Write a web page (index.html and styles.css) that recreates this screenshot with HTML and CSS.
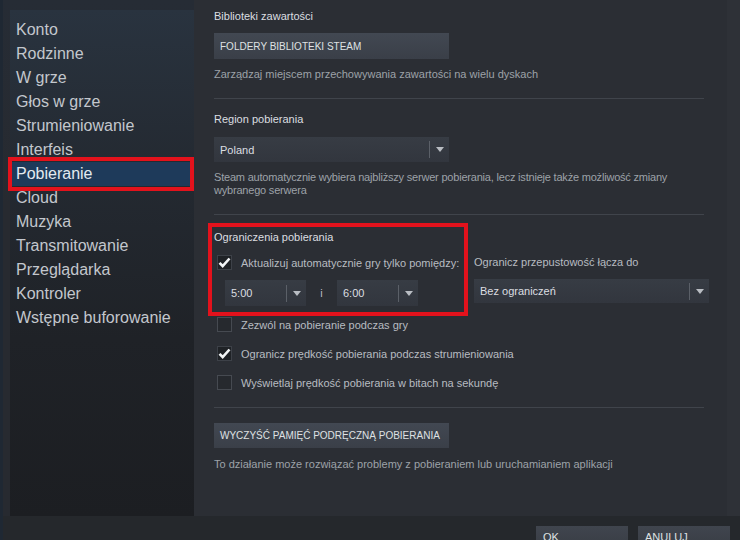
FILE: index.html
```html
<!DOCTYPE html>
<html lang="pl">
<head>
<meta charset="utf-8">
<title>Ustawienia – Pobieranie</title>
<link rel="stylesheet" href="styles.css">
</head>
<body>
<div class="window">
  <div class="body">
    <aside class="side-wrap">
      <nav class="sidebar">
        <div class="nav-item">Konto</div>
        <div class="nav-item">Rodzinne</div>
        <div class="nav-item">W grze</div>
        <div class="nav-item">Głos w grze</div>
        <div class="nav-item">Strumieniowanie</div>
        <div class="nav-item">Interfeis</div>
        <div class="nav-item active marked">Pobieranie</div>
        <div class="nav-item">Cloud</div>
        <div class="nav-item">Muzyka</div>
        <div class="nav-item">Transmitowanie</div>
        <div class="nav-item">Przeglądarka</div>
        <div class="nav-item">Kontroler</div>
        <div class="nav-item">Wstępne buforowanie</div>
      </nav>
    </aside>

    <main class="main">
      <section class="sec-lib">
        <div class="heading">Biblioteki zawartości</div>
        <button class="btn btn-wide">FOLDERY BIBLIOTEKI STEAM</button>
        <p class="desc desc-lib">Zarządzaj miejscem przechowywania zawartości na wielu dyskach</p>
      </section>
      <hr class="sep sep-1">

      <section class="sec-region">
        <div class="heading heading-region">Region pobierania</div>
        <div class="select select-region">
          <span class="select-value">Poland</span>
          <span class="select-arrow"><svg width="8" height="5" viewBox="0 0 8 5"><path d="M0 0h8L4 5z" fill="#b9bdc3"/></svg></span>
        </div>
        <p class="desc desc-region">Steam automatycznie wybiera najbliższy serwer pobierania, lecz istnieje także możliwość zmiany<br>wybranego serwera</p>
      </section>
      <hr class="sep sep-2">

      <section class="sec-limits">
        <div class="limits-box">
          <div class="heading heading-limits">Ograniczenia pobierania</div>
          <div class="limits-cols">
            <div class="limits-left">
              <label class="check-row">
                <span class="check checked"><svg width="13" height="11" viewBox="0 0 13 11"><path d="M1.5 5.8l3.2 3.2 6.8-7.5" fill="none" stroke="#f2f4f6" stroke-width="2.6"/></svg></span>
                <span class="check-label">Aktualizuj automatycznie gry tylko pomiędzy:</span>
              </label>
              <div class="time-row">
                <div class="select select-time">
                  <span class="select-value">5:00</span>
                  <span class="select-arrow"><svg width="8" height="5" viewBox="0 0 8 5"><path d="M0 0h8L4 5z" fill="#b9bdc3"/></svg></span>
                </div>
                <span class="time-and">i</span>
                <div class="select select-time">
                  <span class="select-value">6:00</span>
                  <span class="select-arrow"><svg width="8" height="5" viewBox="0 0 8 5"><path d="M0 0h8L4 5z" fill="#b9bdc3"/></svg></span>
                </div>
              </div>
            </div>
            <div class="limits-right">
              <div class="check-label">Ogranicz przepustowość łącza do</div>
              <div class="select select-bw">
                <span class="select-value">Bez ograniczeń</span>
                <span class="select-arrow"><svg width="8" height="5" viewBox="0 0 8 5"><path d="M0 0h8L4 5z" fill="#b9bdc3"/></svg></span>
              </div>
            </div>
          </div>
          <div class="mark-frame"></div>
        </div>

        <div class="check-list">
          <label class="check-row">
            <span class="check"></span>
            <span class="check-label">Zezwól na pobieranie podczas gry</span>
          </label>
          <label class="check-row">
            <span class="check checked"><svg width="13" height="11" viewBox="0 0 13 11"><path d="M1.5 5.8l3.2 3.2 6.8-7.5" fill="none" stroke="#f2f4f6" stroke-width="2.6"/></svg></span>
            <span class="check-label">Ogranicz prędkość pobierania podczas strumieniowania</span>
          </label>
          <label class="check-row">
            <span class="check"></span>
            <span class="check-label">Wyświetlaj prędkość pobierania w bitach na sekundę</span>
          </label>
        </div>
      </section>
      <hr class="sep sep-3">

      <section class="sec-cache">
        <button class="btn btn-wide">WYCZYŚĆ PAMIĘĆ PODRĘCZNĄ POBIERANIA</button>
        <p class="desc desc-cache">To działanie może rozwiązać problemy z pobieraniem lub uruchamianiem aplikacji</p>
      </section>
    </main>
    <div class="edge"></div>
  </div>

  <footer class="footer">
    <button class="btn btn-foot">OK</button>
    <button class="btn btn-foot">ANULUJ</button>
  </footer>
</div>
</body>
</html>
```

FILE: styles.css
```css
* {
  box-sizing: border-box;
}

html, body {
  margin: 0;
  padding: 0;
}

body {
  width: 740px;
  height: 540px;
  overflow: hidden;
  background: #272a30;
  font-family: "Liberation Sans", Arial, sans-serif;
  color: #c7cbd0;
}

.window {
  display: flex;
  flex-direction: column;
  height: 540px;
  border-left: 3px solid #1f2833;
}

.body {
  display: flex;
  height: 516px;
}

/* ---------- left navigation ---------- */

.side-wrap {
  width: 191px;
  padding: 10px 0 0 7px;
  background: linear-gradient(180deg, #262c35 0%, #272a30 40%);
}

.sidebar {
  height: 506px;
  padding-top: 8px;
  background: linear-gradient(180deg, #29333f 0%, #242a32 30%, #1f2227 65%, #1c1e22 100%);
}

.nav-item {
  position: relative;
  height: 24px;
  line-height: 24px;
  padding-left: 6px;
  font-size: 16px;
  color: #c3c7cd;
  white-space: nowrap;
}

.nav-item.active {
  background: #1e3a5a;
  color: #e4eaf0;
}

.nav-item.marked::after {
  content: "";
  position: absolute;
  left: -2px;
  right: 0;
  top: -5px;
  bottom: -5px;
  border: 4px solid #e3121c;
}

/* ---------- main panel ---------- */

.main {
  width: 533px;
  padding: 9px 17px 0 20px;
  background: #2b2e34;
}

.edge {
  flex: 1;
  background: #2e3137;
}

.heading {
  font-size: 11px;
  line-height: 14px;
  color: #dcdee0;
}

.desc {
  margin: 0;
  font-size: 11px;
  line-height: 14px;
  color: #9da2a8;
}

.btn {
  display: block;
  border: 0;
  margin: 0;
  padding: 0 0 0 6px;
  text-align: left;
  font-family: "Liberation Sans", Arial, sans-serif;
  font-size: 10px;
  color: #dfe1e3;
  background: linear-gradient(180deg, #424852 0%, #3a3f48 100%);
}

.btn-wide {
  width: 235px;
  height: 26px;
}

.sec-lib .btn {
  margin-top: 10px;
}

.desc-lib {
  margin-top: 8px;
}

.sep {
  height: 1px;
  margin: 0;
  border: 0;
  width: 490px;
  background: #40444b;
}

.sep-1 {
  margin-top: 17px;
}

.heading-region {
  margin-top: 13px;
}

/* dropdowns */

.select {
  display: flex;
  align-items: center;
  height: 25px;
  background: linear-gradient(180deg, #373c44 0%, #32363e 100%);
}

.select-value {
  flex: 1;
  padding-left: 6px;
  font-size: 11px;
  color: #dcdee1;
}

.select-arrow {
  display: flex;
  align-items: center;
  justify-content: center;
  width: 20px;
  height: 17px;
  border-left: 1px solid #5b6068;
}

.select-region {
  width: 235px;
  margin-top: 11px;
}

.desc-region {
  margin-top: 9px;
  line-height: 13px;
  letter-spacing: -0.2px;
  white-space: nowrap;
}

.sep-2 {
  margin-top: 17px;
}

/* download limits */

.limits-box {
  position: relative;
}

.heading-limits {
  padding-top: 15px;
}

.limits-cols {
  display: flex;
  margin-top: 11px;
}

.limits-left {
  width: 260px;
  padding-left: 3px;
}

.limits-right {
  width: 235px;
}

.limits-right .check-label {
  line-height: 15px;
}

.select-bw {
  margin-top: 9px;
  height: 24px;
}

.check-row {
  display: flex;
  align-items: center;
  height: 15px;
  gap: 9px;
}

.check {
  display: flex;
  align-items: center;
  justify-content: center;
  width: 15px;
  height: 15px;
  border: 1px solid #464a51;
  background: #26292e;
}

.check.checked {
  border-color: #3d4148;
  background: #1f2226;
}

.check-label {
  font-size: 11px;
  color: #b8bcc1;
  white-space: nowrap;
}

.time-row {
  display: flex;
  align-items: center;
  margin-top: 10px;
  padding-left: 8px;
}

.select-time {
  width: 81px;
  height: 26px;
}

.time-and {
  width: 31px;
  text-align: center;
  font-size: 11px;
  color: #b8bcc1;
}

.mark-frame {
  position: absolute;
  left: -6px;
  top: 8px;
  width: 260px;
  height: 93px;
  border: 4px solid #e3121c;
}

.check-list {
  display: flex;
  flex-direction: column;
  gap: 14px;
  margin-top: 11px;
  padding-left: 3px;
}

.sep-3 {
  margin-top: 17px;
}

.sec-cache .btn {
  margin-top: 15px;
  height: 25px;
}

.desc-cache {
  margin-top: 9px;
}

/* bottom bar */

.footer {
  display: flex;
  justify-content: flex-end;
  gap: 10px;
  height: 24px;
  padding: 10px 10px 0 0;
  background: #25282c;
}

.btn-foot {
  display: flex;
  align-items: flex-start;
  align-self: flex-start;
  width: 92px;
  height: 24px;
  padding: 5px 0 0 7px;
  font-size: 11px;
  line-height: 12px;
  background: linear-gradient(180deg, #40454e 0%, #383c44 100%);
}
```
